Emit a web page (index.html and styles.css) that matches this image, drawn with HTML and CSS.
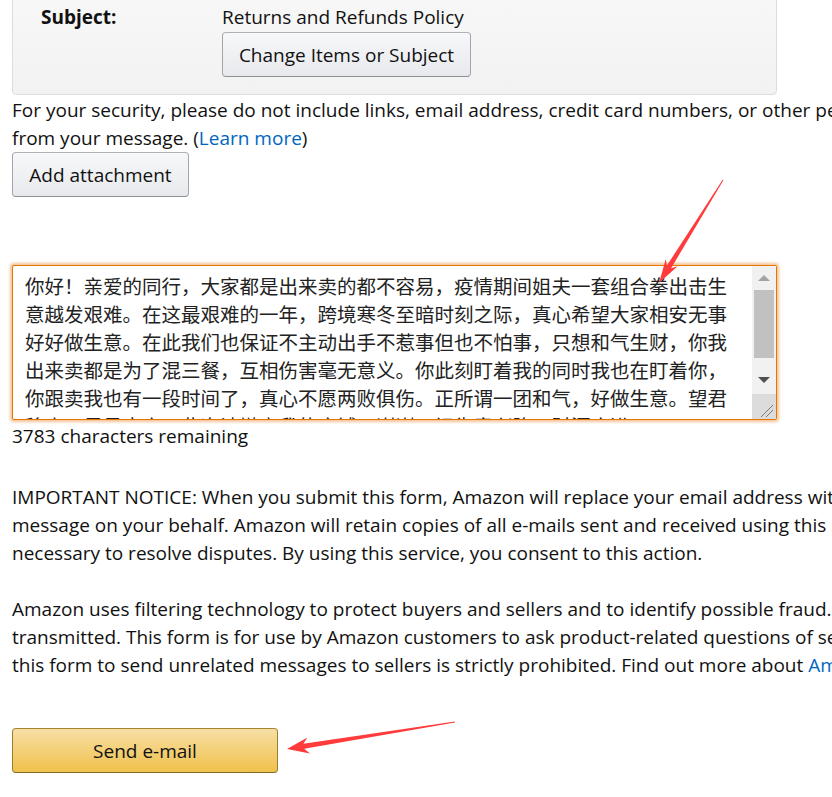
FILE: index.html
```html
<!DOCTYPE html>
<html lang="en">
<head>
<meta charset="utf-8">
<title>Contact seller</title>
<link rel="stylesheet" href="styles.css">
</head>
<body>
<div class="page">
  <div class="summary">
    <div class="row">
      <div class="label">Subject:</div>
      <div class="value">
        <div class="value-text">Returns and Refunds Policy</div>
        <button class="btn btn-change">Change Items or Subject</button>
      </div>
    </div>
  </div>

  <p class="security">
    <span class="line">For your security, please do not include links, email address, credit card numbers, or other personal information in your message. Please remove such information</span>
    <span class="line">from your message. (<a href="#" class="link">Learn more</a>)</span>
  </p>
  <button class="btn btn-attach">Add attachment</button>

  <div class="textarea">
    <div class="ta-text">
      <div>你好！亲爱的同行，大家都是出来卖的都不容易，疫情期间姐夫一套组合拳出击生</div>
      <div>意越发艰难。在这最艰难的一年，跨境寒冬至暗时刻之际，真心希望大家相安无事</div>
      <div>好好做生意。在此我们也保证不主动出手不惹事但也不怕事，只想和气生财，你我</div>
      <div>出来卖都是为了混三餐，互相伤害毫无意义。你此刻盯着我的同时我也在盯着你，</div>
      <div>你跟卖我也有一段时间了，真心不愿两败俱伤。正所谓一团和气，好做生意。望君</div>
      <div>移步，另寻良商，此次请撤离我的店铺，谢谢！祝生意兴隆，财源广进。</div>
    </div>
    <div class="scrollbar">
      <div class="sb-btn"><span class="tri-up"></span></div>
      <div class="sb-thumb"></div>
      <div class="sb-space"></div>
      <div class="sb-btn"><span class="tri-down"></span></div>
      <div class="sb-corner">
        <svg width="24" height="25" viewBox="0 0 24 25">
          <line x1="21" y1="11" x2="9" y2="23" stroke="#7a7a7a" stroke-width="1"/>
          <line x1="21" y1="16" x2="14" y2="23" stroke="#7a7a7a" stroke-width="1"/>
        </svg>
      </div>
    </div>
  </div>
  <div class="count">3783 characters remaining</div>

  <p class="notice">
    <span class="line">IMPORTANT NOTICE: When you submit this form, Amazon will replace your email address with an alias and forward the</span>
    <span class="line">message on your behalf. Amazon will retain copies of all e-mails sent and received using this service and may review them as</span>
    <span class="line">necessary to resolve disputes. By using this service, you consent to this action.</span>
  </p>

  <p class="notice notice-2">
    <span class="line">Amazon uses filtering technology to protect buyers and sellers and to identify possible fraud. Messages that fail this filter will not be</span>
    <span class="line">transmitted. This form is for use by Amazon customers to ask product-related questions of sellers. Use of</span>
    <span class="line">this form to send unrelated messages to sellers is strictly prohibited. Find out more about <a href="#" class="link">Amazon's policies</a></span>
  </p>

  <button class="btn-send">Send e-mail</button>
</div>

<svg class="annotations" width="832" height="797" viewBox="0 0 832 797">
  <polygon fill="#ff3b3b" points="723.4,180.3 671.1,268.2 677.6,266.3 659,283 665.8,258.9 666.9,265.6 722.6,179.7"/>
  <polygon fill="#ff3b3b" points="455.1,722.5 304.2,748.8 310.0,753.4 287,749 307.4,737.6 303.4,743.8 454.9,721.5"/>
</svg>
</body>
</html>
```

FILE: styles.css
```css
html, body {
  margin: 0;
  padding: 0;
  background: #ffffff;
  overflow: hidden;
}

body {
  width: 832px;
  height: 797px;
  position: relative;
  font-family: "Open Sans", "Noto Sans", "Noto Sans CJK SC", sans-serif;
  font-size: 19px;
  line-height: 28px;
  color: #111111;
}

.page {
  width: 1200px;
  padding-left: 12px;
}

.summary {
  box-sizing: border-box;
  width: 765px;
  margin-top: -15px;
  padding: 17px 0 17px 28px;
  background: linear-gradient(#f8f8f8, #f2f2f2);
  border: 1px solid #dddddd;
  border-radius: 4px;
}

.row {
  display: grid;
  grid-template-columns: 181px 1fr;
}

.label {
  font-weight: 700;
}

.btn {
  box-sizing: border-box;
  display: block;
  height: 45px;
  padding: 0;
  font-family: inherit;
  font-size: 19px;
  line-height: 28px;
  white-space: nowrap;
  color: #111111;
  background: linear-gradient(#f7f8fa, #e7e9ec);
  border: 1px solid;
  border-color: #adb1b8 #a2a6ac #8d9096;
  border-radius: 4px;
  cursor: pointer;
}

.btn-change {
  margin-top: 1px;
  width: 249px;
}

.security {
  margin: 1px 0 0;
}

.line {
  display: block;
  white-space: nowrap;
}

.link {
  color: #0066c0;
  text-decoration: none;
}

.btn-attach {
  width: 177px;
}

.textarea {
  box-sizing: border-box;
  display: flex;
  width: 765px;
  height: 155px;
  margin-top: 68px;
  border: 1px solid #e77600;
  border-radius: 2px;
  box-shadow: 0 0 3px 2px rgba(228, 121, 17, 0.45);
  background: #ffffff;
  overflow: hidden;
}

.ta-text {
  flex: 1;
  padding: 6px 0 0 12px;
  font-family: "Noto Sans CJK SC", sans-serif;
  font-size: 19.5px;
  line-height: 28px;
  color: #222222;
  white-space: nowrap;
  overflow: hidden;
}

.scrollbar {
  width: 24px;
  display: flex;
  flex-direction: column;
  background: #f1f1f1;
}

.sb-btn {
  height: 24px;
  display: flex;
  align-items: center;
  justify-content: center;
}

.tri-up {
  width: 0;
  height: 0;
  border-left: 6px solid transparent;
  border-right: 6px solid transparent;
  border-bottom: 6px solid #a3a3a3;
}

.tri-down {
  width: 0;
  height: 0;
  border-left: 6px solid transparent;
  border-right: 6px solid transparent;
  border-top: 6px solid #505050;
}

.sb-thumb {
  height: 68px;
  margin: 0 2px;
  background: #c1c1c1;
}

.sb-space {
  flex: 1;
}

.sb-corner {
  height: 25px;
  margin-top: 2px;
  background: #dcdcdc;
}

.sb-corner svg {
  display: block;
}

.count {
  margin-top: 2px;
}

.notice {
  margin: 33px 0 0;
}

.notice-2 {
  margin-top: 28px;
}

.btn-send {
  display: block;
  box-sizing: border-box;
  width: 266px;
  height: 45px;
  margin-top: 49px;
  padding: 0;
  font-family: inherit;
  font-size: 19px;
  color: #111111;
  background: linear-gradient(#f7dfa5, #f0c14b);
  border: 1px solid;
  border-color: #a88734 #9c7e31 #846a29;
  border-radius: 4px;
  cursor: pointer;
}

.annotations {
  position: absolute;
  left: 0;
  top: 0;
  pointer-events: none;
}
```
